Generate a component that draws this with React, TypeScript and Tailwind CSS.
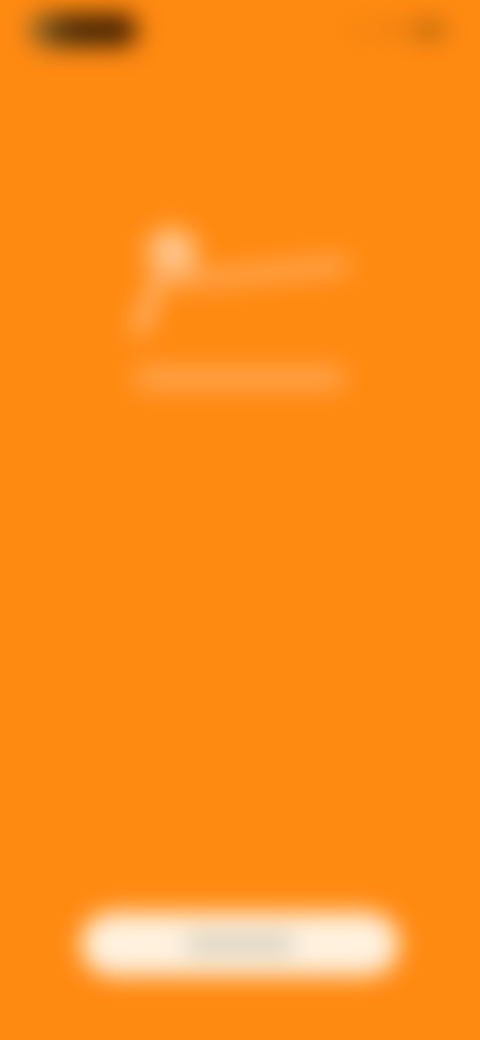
export default function App() {
  return (
    <div className="h-[1040px] w-[480px] overflow-hidden bg-[#ff8a12]">
      <div className="flex h-full flex-col blur-[12px]">
        {/* Status bar */}
        <div className="flex items-center justify-between pl-[28px] pr-[36px] pt-[13px]">
          <div className="h-[34px] w-[110px] rounded-full bg-[linear-gradient(90deg,#a07a30_0%,#4a2a08_38%,#4a2400_100%)]" />
          <div className="flex items-center gap-[8px]">
            <div className="h-[8px] w-[24px] rounded-full bg-[#e07c10]" />
            <div className="h-[10px] w-[24px] rounded-full bg-[#d87810]" />
            <div className="h-[18px] w-[30px] rounded-[4px] bg-[#b8680c]" />
          </div>
        </div>

        {/* Logo */}
        <div className="mt-[168px] flex flex-col items-center">
          <svg width="224" height="124" viewBox="0 0 224 124" fill="none">
            <circle cx="44" cy="38" r="25" fill="#ffc68c" />
            <path d="M38 46 L12 114" stroke="#ffb674" strokeWidth="15" strokeLinecap="round" />
            <path d="M50 64 C90 64 150 56 214 50" stroke="#ffa95a" strokeWidth="16" strokeLinecap="round" />
          </svg>
          <div className="mt-[28px] h-[22px] w-[212px] rounded-full bg-[#ffa552]" />
        </div>

        {/* Button */}
        <div className="mt-auto flex justify-center pb-[64px]">
          <div className="flex h-[64px] w-[318px] items-center justify-center rounded-full bg-[#fff1de]">
            <div className="h-[20px] w-[110px] rounded-full bg-[#d6cfbf]" />
          </div>
        </div>
      </div>
    </div>
  );
}
